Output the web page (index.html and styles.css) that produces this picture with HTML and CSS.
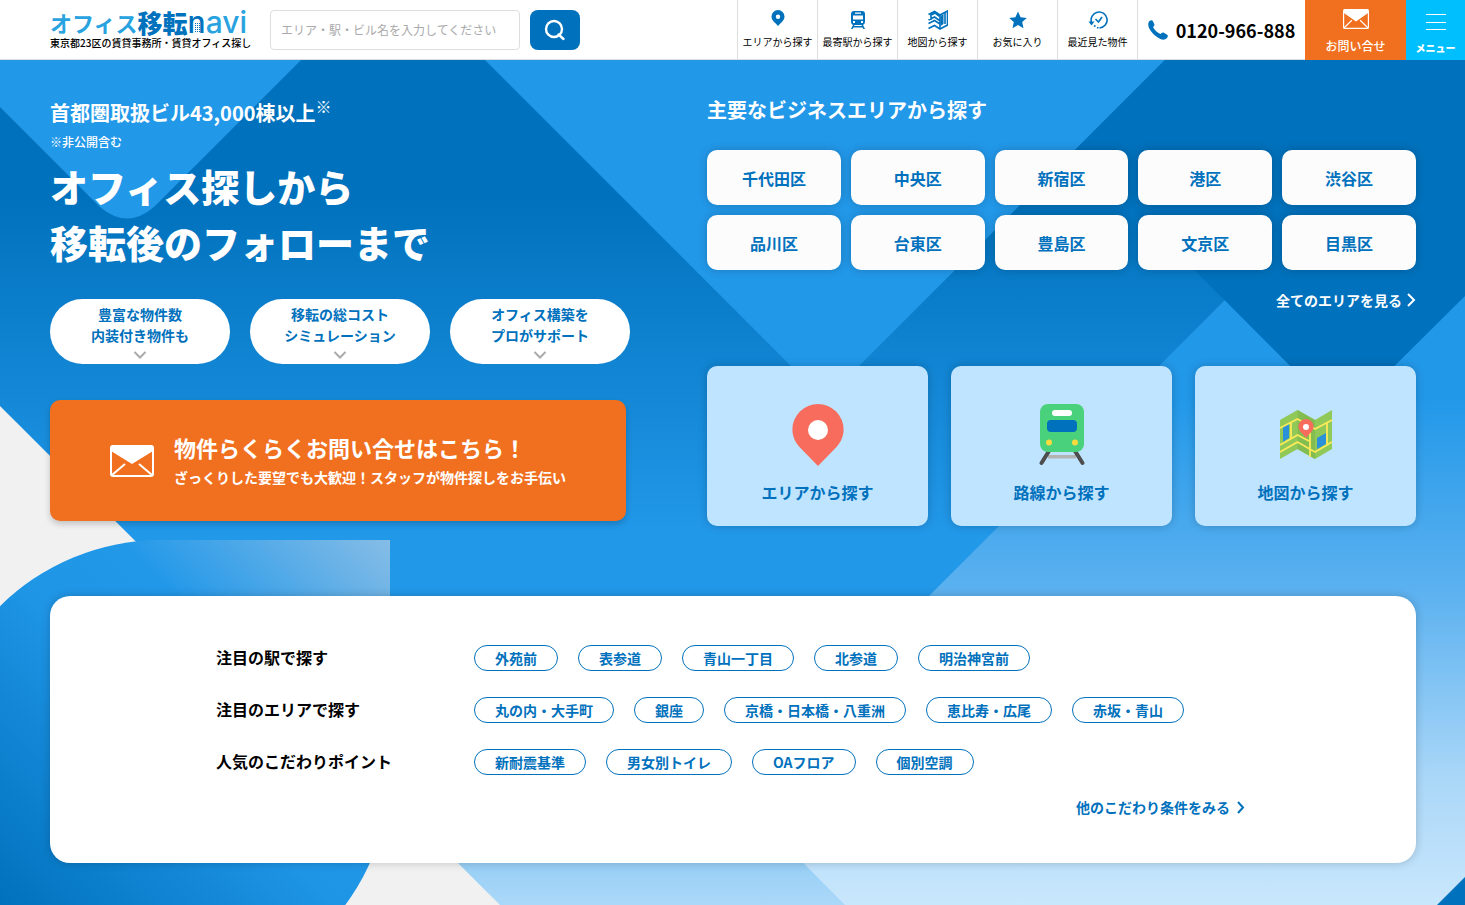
FILE: index.html
```html
<!DOCTYPE html>
<html lang="ja">
<head>
<meta charset="utf-8">
<meta name="viewport" content="width=device-width, initial-scale=1">
<title>オフィス移転navi</title>
<link rel="stylesheet" href="styles.css">
</head>
<body>
<header class="header">
  <a class="logo" href="#">
    <span class="logo-name"><span class="logo-kana">オフィス</span><span class="logo-kanji">移転</span><span class="logo-navi"><span class="logo-n">n</span>avi<svg class="logo-building" width="5" height="10" viewBox="0 0 5 10"><path stroke="#0071bc" stroke-dasharray="1 1" d="M0 .5h5M0 2.500h5M0 4.500h5M0 6.500h5M0 8.500h5"/></svg></span></span>
    <span class="logo-tag">東京都23区の賃貸事務所・賃貸オフィス探し</span>
  </a>
  <form class="search">
    <input class="search-input" type="text" aria-label="キーワード" placeholder="エリア・駅・ビル名を入力してください">
    <button class="search-button" type="button" aria-label="検索">
      <svg width="22" height="22" viewBox="0 0 22 22" fill="none" stroke="#fff" stroke-width="2.4" stroke-linecap="round"><circle cx="10" cy="10" r="8"/><path d="M14.5 15.5 L19.5 20"/></svg>
    </button>
  </form>
  <nav class="nav">
    <a class="nav-item" href="#">
      <svg width="20" height="20" viewBox="0 0 20 20"><path fill="#0071bc" fill-rule="evenodd" d="M10 0a6.500 6.500 0 0 0-6.500 6.500c0 4 3.500 6 6.500 9.500 3-3.500 6.500-5.500 6.500-9.500A6.500 6.500 0 0 0 10 0zm0 4.500a2.200 2.200 0 1 1 0 4.400 2.200 2.200 0 0 1 0-4.400z"/></svg>
      <span>エリアから探す</span>
    </a>
    <a class="nav-item" href="#">
      <svg width="20" height="20" viewBox="0 0 20 20"><path fill="#0071bc" fill-rule="evenodd" d="M6 1h8q3 0 3 3v8q0 2-2 3l2 4h-1.500l-1-1.500h-9L4.500 19H3l2-4q-2-1-2-3V4q0-3 3-3zm1 1.500v1.300h6V2.500zM5 5.500v4h10v-4zm0 5.500v2h2v-2zm8 0v2h2v-2zm-6.500 4l-.500 1h8l-.500-1z"/></svg>
      <span>最寄駅から探す</span>
    </a>
    <a class="nav-item" href="#">
      <svg width="20" height="20" viewBox="0 0 20 20" fill="none" stroke="#0071bc" stroke-width="1.600"><path fill="#0071bc" stroke="none" d="M12.500 6l3-2v10l-3 2zM7 1l5 3.500-1 2.500-4-3-5 2.500v-2z"/><path d="M.5 4.500L6.500 1.500l5.500 3.500 7.500-4v14l-7.500 4-5.500-3.500-6 3"/><path d="M.5 10l6-3 5 3.500M.5 13.500l6-3 5.500 3.500M12 5v13M17 3v11M3 6v4"/></svg>
      <span>地図から探す</span>
    </a>
    <a class="nav-item" href="#">
      <svg width="20" height="20" viewBox="0 0 20 20"><path fill="#0071bc" d="M10 1.500l2.600 5.700 6.200.700-4.600 4.200 1.300 6.100-5.500-3.100-5.500 3.100 1.300-6.100-4.600-4.200 6.200-.700z"/></svg>
      <span>お気に入り</span>
    </a>
    <a class="nav-item" href="#">
      <svg width="20" height="20" viewBox="0 0 20 20" fill="none" stroke="#0071bc" stroke-width="1.600"><path d="M3.500 12.500A8 8 0 1 1 11.500 18"/><path d="M7.500 9l3 3 3.500-5"/><path d="M.5 11.500h6l-3 4z" fill="#0071bc" stroke="none"/><path d="M6 15.500l1.500 1M9 17.500l1.500.500"/></svg>
      <span>最近見た物件</span>
    </a>
  </nav>
  <a class="phone" href="tel:0120966888">
    <svg width="20" height="20" viewBox="0 0 20 20"><path fill="#0071bc" d="M1 1.500Q3-.5 4.500.500l2 4q0 1.500-1.500 2.500 2.500 5 7.500 7 1.500-2 3-1.500l4 2.500q1 1.500-1 3.500-3 2.500-8-.500Q4 14 1 8-.500 4 1 1.500z"/></svg>
    <span>0120-966-888</span>
  </a>
  <a class="contact" href="#">
    <svg width="26" height="20" viewBox="0 0 44 32" preserveAspectRatio="none"><rect x="1" y="1" width="42" height="30" rx="2" fill="none" stroke="#fff" stroke-width="2"/><path fill="#fff" d="M1 1h42v5L22 20 1 6z"/><path fill="none" stroke="#fff" stroke-width="2" d="M2 30l13-12M42 30L29 18"/></svg>
    <span>お問い合せ</span>
  </a>
  <button class="menu" type="button">
    <span class="menu-lines"></span>
    <span>メニュー</span>
  </button>
</header>

<main class="hero">
  <svg class="hero-bg" viewBox="0 60 1465 845" preserveAspectRatio="xMidYMin slice" aria-hidden="true">
    <defs>
      <linearGradient id="band" gradientUnits="userSpaceOnUse" x1="0" y1="60" x2="0" y2="905">
        <stop offset="0.160" stop-color="#0071bc"/><stop offset="0.560" stop-color="#2298e9"/><stop offset="0.660" stop-color="#2298e9"/><stop offset="1" stop-color="#abd8f8"/>
      </linearGradient>
      <linearGradient id="pale" gradientUnits="userSpaceOnUse" x1="0" y1="60" x2="0" y2="905">
        <stop offset="0.400" stop-color="#2298e9"/><stop offset="0.640" stop-color="#5fb3f0"/><stop offset="0.850" stop-color="#aad7f8"/><stop offset="1" stop-color="#c9e7fc"/>
      </linearGradient>
      <linearGradient id="disc" gradientUnits="userSpaceOnUse" x1="0" y1="905" x2="378" y2="527">
        <stop offset="0" stop-color="#0071bc"/><stop offset="0.450" stop-color="#1f95e6"/><stop offset="0.640" stop-color="#2298e9"/><stop offset="1" stop-color="#86bde6"/>
      </linearGradient>
    </defs>
    <path fill="#f1f1f1" d="M0 60H1465V905H0z"/>
    <path fill="url(#band)" d="M0 60H1465V905H500L0 406z"/>
    <path fill="url(#pale)" d="M1222 303L733 792 845 905H1465V60z"/>
    <path fill="#2298e9" d="M0 60H301L154 207Q127 230 100 207L0 107z"/>
    <path fill="#2298e9" d="M485 60H1165L825 400z"/>
    <path fill="#0071bc" d="M1165 60H1465V296L1342 418 1075 150z"/>
    <path fill="#0071bc" d="M1465 877V905H1437z"/>
    <path fill="url(#disc)" d="M161 540H390V769A229 229 0 1 1 161 540z"/>
  </svg>

  <div class="hero-inner">
    <div class="columns">
      <section class="intro">
        <p class="lead">首都圏取扱ビル43,000棟以上<span class="mark">※</span></p>
        <p class="note">※非公開含む</p>
        <h1 class="title">オフィス探しから<br>移転後のフォローまで</h1>
        <div class="pills">
          <a class="pill" href="#">豊富な物件数<br>内装付き物件も<svg width="14" height="8" viewBox="0 0 14 8"><path d="M1.500 1L7 6.500 12.500 1"/></svg></a>
          <a class="pill" href="#">移転の総コスト<br>シミュレーション<svg width="14" height="8" viewBox="0 0 14 8"><path d="M1.500 1L7 6.500 12.500 1"/></svg></a>
          <a class="pill" href="#">オフィス構築を<br>プロがサポート<svg width="14" height="8" viewBox="0 0 14 8"><path d="M1.500 1L7 6.500 12.500 1"/></svg></a>
        </div>
        <a class="cta" href="#">
          <svg width="44" height="32" viewBox="0 0 44 32"><rect x="1" y="1" width="42" height="30" rx="2" fill="none" stroke="#fff" stroke-width="2"/><path fill="#fff" d="M1 1h42v5L22 19 1 6z"/><path fill="none" stroke="#fff" stroke-width="2" d="M2 30l13-11M42 30L29 19"/></svg>
          <span class="cta-text"><span class="cta-title">物件らくらくお問い合せはこちら！</span><span class="cta-sub">ざっくりした要望でも大歓迎！スタッフが物件探しをお手伝い</span></span>
        </a>
      </section>

      <section class="finder">
        <h2 class="finder-title">主要なビジネスエリアから探す</h2>
        <div class="areas">
          <a class="area" href="#">千代田区</a><a class="area" href="#">中央区</a><a class="area" href="#">新宿区</a><a class="area" href="#">港区</a><a class="area" href="#">渋谷区</a>
          <a class="area" href="#">品川区</a><a class="area" href="#">台東区</a><a class="area" href="#">豊島区</a><a class="area" href="#">文京区</a><a class="area" href="#">目黒区</a>
        </div>
        <a class="more more-light" href="#">全てのエリアを見る<svg width="10" height="14" viewBox="0 0 10 14"><path d="M2 1L8 7 2 13"/></svg></a>
        <div class="cards">
          <a class="card" href="#">
            <svg width="64" height="64" viewBox="0 0 64 64"><path fill="#f76c5c" d="M32 1A25.600 25.600 0 0 0 6.400 26.600C6.400 33 9 39 13.500 44L32 63 50.500 44C55 39 57.600 33 57.600 26.600A25.600 25.600 0 0 0 32 1z"/><circle cx="32" cy="27" r="10" fill="#fff"/></svg>
            <span>エリアから探す</span>
          </a>
          <a class="card" href="#">
            <svg width="64" height="64" viewBox="0 0 64 64"><path fill="#b3b3b3" d="M18 52h28v3.500H18z"/><path stroke="#4d4d4d" stroke-width="4" stroke-linecap="round" d="M19 48L11.500 60M45 48l7.500 12"/><rect x="10" y="1" width="44" height="48" rx="8" fill="#4ad17c"/><rect x="22" y="7" width="20" height="6" rx="3" fill="#fff"/><rect x="17" y="17" width="30" height="12" rx="4" fill="#0071bc"/><circle cx="19" cy="39.500" r="3" fill="#fddb3e"/><circle cx="45" cy="39.500" r="3" fill="#fddb3e"/></svg>
            <span>路線から探す</span>
          </a>
          <a class="card" href="#">
            <svg width="64" height="64" viewBox="0 0 64 64"><path fill="#90c957" d="M6 17L23.500 7 41 17 58 7V46L41 56 23.500 46 6 56z"/><path fill="#83bc50" d="M23.500 7L41 17V56L23.500 46z"/><path fill="#2b91d9" d="M9 24l6-4v15l-6 4zM43 35l9-5v11l-9 5z"/><path fill="none" stroke="#fdea5a" stroke-width="1.800" d="M6 25l17.500-9L41 26 58 17M6 42l17.500-10L35 38M6 49l17.500-10L41 49l17-10M17 19v16M53 20v21M36 54V28"/><path fill="#f76c5c" d="M32 16a7.500 7.500 0 0 0-7.500 7.500c0 5 4 6.500 7.500 11.500 3.500-5 7.500-6.500 7.500-11.500A7.500 7.500 0 0 0 32 16z"/><circle cx="32" cy="24" r="3" fill="#fff"/></svg>
            <span>地図から探す</span>
          </a>
        </div>
      </section>
    </div>

    <section class="panel">
      <dl class="topics">
        <div class="topic"><dt>注目の駅で探す</dt><dd><a class="tag" href="#">外苑前</a><a class="tag" href="#">表参道</a><a class="tag" href="#">青山一丁目</a><a class="tag" href="#">北参道</a><a class="tag" href="#">明治神宮前</a></dd></div>
        <div class="topic"><dt>注目のエリアで探す</dt><dd><a class="tag" href="#">丸の内・大手町</a><a class="tag" href="#">銀座</a><a class="tag" href="#">京橋・日本橋・八重洲</a><a class="tag" href="#">恵比寿・広尾</a><a class="tag" href="#">赤坂・青山</a></dd></div>
        <div class="topic"><dt>人気のこだわりポイント</dt><dd><a class="tag" href="#">新耐震基準</a><a class="tag" href="#">男女別トイレ</a><a class="tag" href="#">OAフロア</a><a class="tag" href="#">個別空調</a></dd></div>
      </dl>
      <a class="more more-blue" href="#">他のこだわり条件をみる<svg width="10" height="14" viewBox="0 0 10 14"><path d="M2 2L7 7.500 2 13"/></svg></a>
    </section>
  </div>
</main>
</body>
</html>
```
FILE: styles.css
```css
* {
  box-sizing: border-box;
}

body {
  margin: 0;
  min-height: 100vh;
  display: flex;
  flex-direction: column;
  font-family: "Noto Sans CJK JP", sans-serif;
  color: #000;
  background: #f1f1f1;
}

a {
  color: inherit;
  text-decoration: none;
}

button {
  border: 0;
  padding: 0;
  font-family: inherit;
}

h1, h2, p, dl, dd {
  margin: 0;
}

svg {
  flex: none;
}

.header {
  display: flex;
  height: 60px;
  padding-left: 50px;
  background: #fff;
  box-shadow: inset 0 -1px #ddd;
}

.logo {
  display: flex;
  flex-direction: column;
  flex: none;
  width: 200px;
  margin-right: 20px;
  padding-top: 9px;
  white-space: nowrap;
}

.logo-name {
  display: flex;
  align-items: center;
  height: 26px;
  line-height: 26px;
  color: #29a3df;
}

.logo-kana {
  font-size: 22px;
  font-weight: 700;
}

.logo-kanji {
  font-size: 25px;
  font-weight: 900;
  color: #0071bc;
}

.logo-navi {
  position: relative;
  font-family: Inter, sans-serif;
  font-size: 30px;
  font-weight: 500;
}

.logo-n {
  color: #0071bc;
}

.logo-building {
  position: absolute;
  left: 7px;
  bottom: 2px;
}

.logo-tag {
  padding-top: 1px;
  font-size: 10px;
  line-height: 14px;
  font-weight: 500;
}

.search {
  display: flex;
  gap: 10px;
  padding: 10px 0;
}

.search-input {
  width: 250px;
  height: 40px;
  padding: 0 10px 2px;
  border: 1px solid #ddd;
  border-radius: 4px;
  font-family: inherit;
  font-size: 12px;
}

.search-input::placeholder {
  color: #aaa;
}

.search-button {
  display: flex;
  align-items: center;
  justify-content: center;
  width: 50px;
  height: 40px;
  border-radius: 8px;
  background: #0071bc;
}

.nav {
  display: flex;
  margin-left: auto;
}

.nav-item {
  display: flex;
  flex-direction: column;
  align-items: center;
  gap: 4px;
  width: 80px;
  padding-top: 10px;
  border-left: 1px solid #ddd;
  font-size: 10px;
  line-height: 16px;
  white-space: nowrap;
}

.phone {
  display: flex;
  align-items: center;
  justify-content: center;
  gap: 8px;
  width: 168px;
  border-left: 1px solid #ddd;
  font-size: 18px;
  line-height: 24px;
  font-weight: 700;
}

.contact,
.menu {
  display: flex;
  flex-direction: column;
  align-items: center;
  color: #fff;
}

.contact {
  gap: 9px;
  width: 101px;
  padding-top: 9px;
  background: #f17020;
  font-size: 12px;
  line-height: 16px;
  font-weight: 500;
}

.menu {
  gap: 10px;
  width: 59px;
  padding-top: 14px;
  background: #00bfff;
  font-size: 10px;
  line-height: 16px;
  font-weight: 900;
}

.menu-lines {
  width: 20px;
  height: 16px;
  border-top: 1px solid #fff;
  border-bottom: 1px solid #fff;
  background: linear-gradient(#fff, #fff) center / 100% 1px no-repeat;
}

.hero {
  position: relative;
  flex: 1;
  overflow: hidden;
}

.hero-bg {
  position: absolute;
  inset: 0;
  width: 100%;
  height: 100%;
}

.hero-inner {
  position: relative;
  padding: 34px 49px 42px 50px;
}

.columns {
  display: flex;
  justify-content: space-between;
}

.intro {
  width: 580px;
  color: #fff;
}

.lead {
  display: flex;
  font-size: 20px;
  line-height: 38px;
  font-weight: 700;
}

.mark {
  font-size: 16px;
  line-height: 24px;
}

.note {
  font-size: 12px;
  line-height: 20px;
  font-weight: 500;
}

.title {
  padding-top: 6px;
  font-size: 38px;
  line-height: 56px;
  font-weight: 900;
}

.pills {
  display: flex;
  gap: 20px;
  margin-top: 29px;
}

.pill {
  flex: 1;
  height: 65px;
  padding-top: 5px;
  border-radius: 33px;
  background: #fff;
  color: #0071bc;
  font-size: 14px;
  line-height: 21px;
  font-weight: 700;
  text-align: center;
}

.pill svg {
  display: block;
  margin: 5px auto 0;
  fill: none;
  stroke: #aaa;
  stroke-width: 2;
}

.cta {
  display: flex;
  align-items: center;
  gap: 20px;
  margin: 36px 4px 0 0;
  height: 121px;
  padding-left: 60px;
  border-radius: 10px;
  background: #f17020;
  box-shadow: 0 3px 6px rgba(0, 0, 0, 0.2);
  font-weight: 700;
  white-space: nowrap;
}

.cta-text {
  display: flex;
  flex-direction: column;
  padding-bottom: 2px;
}

.cta-title {
  font-size: 22px;
  line-height: 34px;
}

.cta-sub {
  font-size: 14px;
  line-height: 26px;
}

.finder {
  display: flex;
  flex-direction: column;
  width: 709px;
}

.finder-title {
  color: #fff;
  font-size: 20px;
  line-height: 32px;
  font-weight: 700;
}

.areas {
  display: grid;
  grid-template-columns: repeat(5, 1fr);
  gap: 10px;
  margin-top: 24px;
}

.area {
  display: flex;
  align-items: center;
  justify-content: center;
  height: 55px;
  border-radius: 10px;
  background: #fcfcfc;
  box-shadow: 0 0 10px rgba(0, 0, 0, 0.2);
  color: #0071bc;
  font-size: 16px;
  font-weight: 700;
}

.more {
  display: flex;
  align-items: center;
  align-self: flex-end;
  font-size: 14px;
  line-height: 20px;
  font-weight: 700;
}

.more svg {
  fill: none;
  stroke: currentColor;
  stroke-width: 2;
}

.more-light {
  gap: 4px;
  margin-top: 20px;
  color: #fff;
}

.cards {
  display: grid;
  grid-template-columns: repeat(3, 1fr);
  gap: 23px;
  margin-top: 56px;
}

.card {
  display: flex;
  flex-direction: column;
  align-items: center;
  gap: 11px;
  height: 160px;
  padding-top: 37px;
  border-radius: 10px;
  background: #bfe4ff;
  box-shadow: 0 0 10px rgba(0, 0, 0, 0.2);
  color: #0071bc;
  font-size: 16px;
  line-height: 28px;
  font-weight: 700;
}

.panel {
  display: flex;
  flex-direction: column;
  margin-top: 70px;
  padding: 48px 170px 46px 166px;
  border-radius: 20px;
  background: #fff;
  box-shadow: 0 0 10px rgba(0, 0, 0, 0.2);
}

.topics {
  display: flex;
  flex-direction: column;
  gap: 24px;
}

.topic {
  display: flex;
  align-items: center;
}

.topic dt {
  width: 258px;
  padding-bottom: 2px;
  font-size: 16px;
  line-height: 26px;
  font-weight: 700;
}

.topic dd {
  display: flex;
  gap: 20px;
}

.tag {
  height: 26px;
  padding: 0 20px;
  border: 1px solid #0071bc;
  border-radius: 13px;
  color: #0071bc;
  font-size: 14px;
  line-height: 24px;
  font-weight: 700;
}

.more-blue {
  gap: 6px;
  margin-top: 21px;
  color: #0071bc;
}
```
